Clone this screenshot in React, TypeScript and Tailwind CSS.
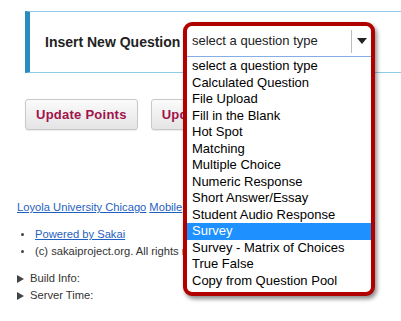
const questionTypes = [
  "select a question type",
  "Calculated Question",
  "File Upload",
  "Fill in the Blank",
  "Hot Spot",
  "Matching",
  "Multiple Choice",
  "Numeric Response",
  "Short Answer/Essay",
  "Student Audio Response",
  "Survey",
  "Survey - Matrix of Choices",
  "True False",
  "Copy from Question Pool",
];

const selected = "Survey";

function Caret() {
  return (
    <svg width="10" height="6" viewBox="0 0 10 6" className="block">
      <path d="M0 0h10L5 6z" fill="#222" />
    </svg>
  );
}

function Disclosure() {
  return (
    <svg width="7" height="8" viewBox="0 0 7 8" className="block">
      <path d="M0 0l7 4-7 4z" fill="#444" />
    </svg>
  );
}

function Button({ label }: { label: string }) {
  return (
    <button className="h-[31px] shrink-0 rounded-[3px] border border-[#c8c8c8] bg-gradient-to-b from-[#fbfbfb] to-[#e4e4e4] px-[10px] text-[13px] font-bold tracking-[0.25px] text-[#a0134a] shadow-[0_1px_1px_rgba(0,0,0,0.08)]">
      {label}
    </button>
  );
}

export default function App() {
  return (
    <div className="relative h-[321px] w-[401px] overflow-hidden bg-white font-['Liberation_Sans',Arial,sans-serif]">
      <div className="ml-[25px] mt-[11px] flex h-[62px] items-center border-y border-l-[5px] border-y-[#8fcbe8] border-l-[#2a8bbf] pl-[15px]">
        <span className="text-[14px] font-bold text-[#222]">Insert New Question</span>
      </div>

      <div className="ml-[25px] mt-[26px] flex gap-[13px]">
        <Button label="Update Points" />
        <Button label="Update Points" />
      </div>

      <div className="ml-[17px] mt-[69px] text-[11.2px] leading-[17px] text-[#333]">
        <div className="flex gap-[3px] text-[#1f5fc0]">
          <a className="underline">Loyola University Chicago</a>
          <a className="underline">Mobile</a>
        </div>
        <ul className="mt-[10px] flex flex-col">
          <li className="flex items-center">
            <span className="ml-[4px] mr-[11px] h-[3px] w-[3px] rounded-full bg-[#444]" />
            <a className="underline text-[#1f5fc0]">Powered by Sakai</a>
          </li>
          <li className="flex items-center">
            <span className="ml-[4px] mr-[11px] h-[3px] w-[3px] rounded-full bg-[#444]" />
            <span>(c) sakaiproject.org. All rights reserved.</span>
          </li>
        </ul>
        <div className="mt-[10px] flex flex-col">
          <div className="flex items-center gap-[6px]">
            <Disclosure />
            <span>Build Info:</span>
          </div>
          <div className="flex items-center gap-[6px]">
            <Disclosure />
            <span>Server Time:</span>
          </div>
        </div>
      </div>

      <div className="absolute left-[183px] top-[22px] flex h-[274px] w-[192px] flex-col overflow-hidden rounded-[9px] border-4 border-[#b00000] bg-white shadow-[2px_3px_4px_rgba(0,0,0,0.45)]">
        <div className="flex h-[31px] shrink-0 items-center border-b border-[#86aee6]">
          <span className="flex-1 pl-[5px] text-[13px] text-[#222]">select a question type</span>
          <div className="flex h-[23px] w-[20px] items-center justify-center border-l border-[#bdbdbd]">
            <Caret />
          </div>
        </div>
        <ul className="pt-[1px]">
          {questionTypes.map((t) => (
            <li
              key={t}
              className={
                t === selected
                  ? "h-[16.5px] bg-[#1e90ff] pl-[5px] text-[13px] leading-[16.5px] text-white"
                  : "h-[16.5px] pl-[5px] text-[13px] leading-[16.5px] text-black"
              }
            >
              {t}
            </li>
          ))}
        </ul>
      </div>
    </div>
  );
}
